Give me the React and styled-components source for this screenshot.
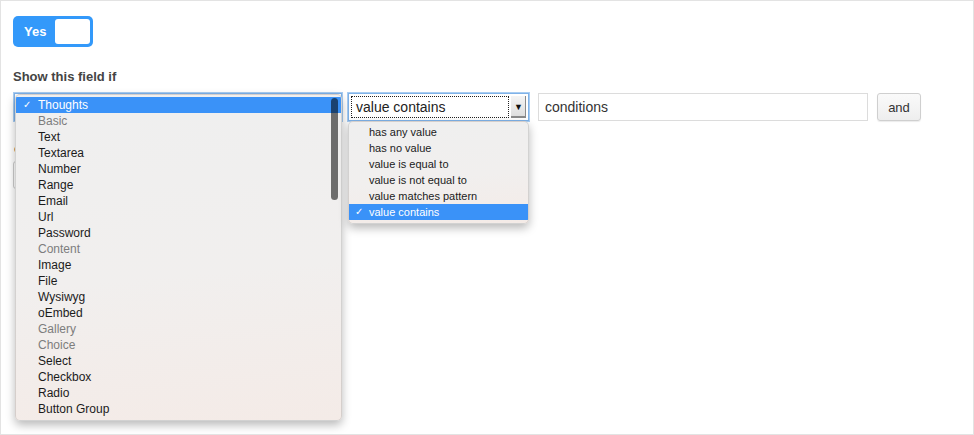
import { styled, createGlobalStyle } from "styled-components";

const GlobalStyle = createGlobalStyle`
  html, body {
    margin: 0;
    padding: 0;
    background: #ffffff;
  }
  body {
    font-family: "Liberation Sans", Arial, sans-serif;
    color: #333;
  }
`;

// outer frame with a thin grey border all round
const Page = styled.div`
  box-sizing: border-box;
  width: 974px;
  height: 435px;
  border: 1px solid #e3e3e3;
  padding: 15px 12px;
  overflow: hidden;
`;

const Toggle = styled.div`
  box-sizing: border-box;
  width: 80px;
  height: 31px;
  border-radius: 5px;
  background: #3399fa;
  display: flex;
  align-items: center;
  justify-content: space-between;
  padding: 0 3px 0 11px;
  color: #fff;
  font-weight: 700;
  font-size: 13px;
`;

const Knob = styled.span`
  width: 35px;
  height: 25px;
  border-radius: 3px;
  background: #fff;
`;

const FieldLabel = styled.div`
  margin-top: 22px;
  font-size: 13px;
  font-weight: 700;
  color: #444;
  line-height: 15px;
`;

const Row = styled.div`
  display: flex;
  align-items: flex-start;
  margin-top: 9px;
`;

const SelectWrap = styled.div`
  position: relative;
  width: ${({ $w }) => $w}px;
  margin-left: ${({ $ml }) => $ml || 0}px;
  flex-shrink: 0;
`;

const NativeSelect = styled.div`
  box-sizing: border-box;
  height: 28px;
  border: 1px solid #7fb2e8;
  box-shadow: 0 0 0 1px #a9cdf2;
  background: #fff;
  display: flex;
  padding: 2px;
`;

const SelectValue = styled.div`
  flex: 1;
  border: 1px dotted #222;
  font-size: 14px;
  color: #222;
  display: flex;
  align-items: center;
  padding-left: 4px;
`;

const ArrowButton = styled.div`
  width: 15px;
  margin-left: 2px;
  background: linear-gradient(#f4f4f4, #dcdcdc);
  box-shadow: inset -1px -2px 0 #8a8a8a;
  display: flex;
  align-items: center;
  justify-content: center;
  font-size: 9px;
  color: #111;
`;

// macOS popup list, drawn over the page
const PopupList = styled.ul`
  position: absolute;
  left: ${({ $left }) => $left}px;
  right: ${({ $right }) => $right}px;
  top: ${({ $top }) => $top}px;
  margin: 0;
  padding: ${({ $pad }) => $pad};
  list-style: none;
  background: linear-gradient(175deg, #efefef 0%, #f1efee 55%, #f4ebe7 100%);
  border: 1px solid rgba(0, 0, 0, 0.12);
  border-radius: 5px;
  box-shadow: 0 4px 10px rgba(0, 0, 0, 0.28);
  z-index: 5;
  overflow: hidden;
`;

const Option = styled.li`
  position: relative;
  height: 16px;
  line-height: 16px;
  font-size: ${({ $fs }) => $fs}px;
  padding-left: ${({ $indent }) => $indent}px;
  color: ${({ $group, $selected }) =>
    $selected ? "#fff" : $group ? "#7d7d7d" : "#1b1b1b"};
  background: ${({ $selected }) => ($selected ? "#3a92f8" : "transparent")};
  white-space: nowrap;
`;

const Check = styled.span`
  position: absolute;
  left: ${({ $left }) => $left}px;
  font-size: 10px;
`;

const ScrollThumb = styled.div`
  position: absolute;
  right: 3px;
  top: 3px;
  width: 7px;
  height: 102px;
  border-radius: 4px;
  background: rgba(0, 0, 0, 0.55);
`;

const TextInput = styled.div`
  box-sizing: border-box;
  width: 330px;
  height: 28px;
  margin-left: 9px;
  border: 1px solid #dcdcdc;
  font-size: 14px;
  color: #333;
  display: flex;
  align-items: center;
  padding-left: 6px;
`;

const AndButton = styled.div`
  box-sizing: border-box;
  width: 44px;
  height: 28px;
  margin-left: 9px;
  border: 1px solid #cfcfcf;
  border-radius: 3px;
  background: linear-gradient(#fafafa, #eeeeee);
  box-shadow: 0 1px 1px rgba(0, 0, 0, 0.08);
  font-size: 13px;
  color: #333;
  display: flex;
  align-items: center;
  justify-content: center;
`;

const HiddenGroup = styled.div`
  margin-top: 20px;
`;

const SmallLabel = styled.div`
  font-size: 13px;
  font-weight: 700;
  color: #444;
  margin-left: 1px;
`;

const PlainBox = styled.div`
  box-sizing: border-box;
  width: 200px;
  height: 28px;
  margin-top: 5px;
  border: 1px solid #ccc;
  border-radius: 3px;
`;

const fieldTypes = [
  { label: "Thoughts", selected: true },
  { label: "Basic", group: true },
  { label: "Text" },
  { label: "Textarea" },
  { label: "Number" },
  { label: "Range" },
  { label: "Email" },
  { label: "Url" },
  { label: "Password" },
  { label: "Content", group: true },
  { label: "Image" },
  { label: "File" },
  { label: "Wysiwyg" },
  { label: "oEmbed" },
  { label: "Gallery", group: true },
  { label: "Choice", group: true },
  { label: "Select" },
  { label: "Checkbox" },
  { label: "Radio" },
  { label: "Button Group" },
];

const operators = [
  "has any value",
  "has no value",
  "value is equal to",
  "value is not equal to",
  "value matches pattern",
  "value contains",
];

export default function App() {
  return (
    <>
      <GlobalStyle />
      <Page>
        <Toggle>
          Yes
          <Knob />
        </Toggle>

        <FieldLabel>Show this field if</FieldLabel>

        <Row>
          <SelectWrap $w={328} $ml={1}>
            {/* the open popup hides the select's own value */}
            <NativeSelect />
            <PopupList $left={1} $right={0} $top={1} $pad="2px 0 3px">
              {fieldTypes.map((t) => (
                <Option
                  key={t.label}
                  $fs={12}
                  $indent={22}
                  $group={t.group}
                  $selected={t.selected}
                >
                  {t.selected && <Check $left={7}>✓</Check>}
                  {t.label}
                </Option>
              ))}
              <ScrollThumb />
            </PopupList>
          </SelectWrap>

          <SelectWrap $w={181} $ml={6}>
            <NativeSelect>
              <SelectValue>value contains</SelectValue>
              <ArrowButton>▼</ArrowButton>
            </NativeSelect>
            <PopupList $left={0} $right={0} $top={28} $pad="2px 0 3px">
              {operators.map((op) => (
                <Option
                  key={op}
                  $fs={11}
                  $indent={20}
                  $selected={op === "value contains"}
                >
                  {op === "value contains" && <Check $left={6}>✓</Check>}
                  {op}
                </Option>
              ))}
            </PopupList>
          </SelectWrap>

          <TextInput>conditions</TextInput>
          <AndButton>and</AndButton>
        </Row>

        <HiddenGroup>
          <SmallLabel>c</SmallLabel>
          <PlainBox />
        </HiddenGroup>
      </Page>
    </>
  );
}
